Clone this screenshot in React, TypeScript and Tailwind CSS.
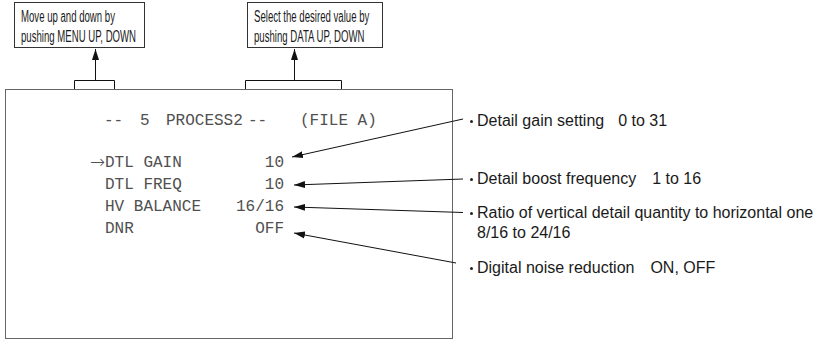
import React from "react";

const Bullet = () => (
  <span className="w-[11px] h-[20px] flex items-center justify-center shrink-0">
    <span className="w-[3px] h-[3px] rounded-full bg-[#222]" />
  </span>
);

const rows = [
  { sel: true, label: "DTL GAIN", value: "10" },
  { sel: false, label: "DTL FREQ", value: "10" },
  { sel: false, label: "HV BALANCE", value: "16/16" },
  { sel: false, label: "DNR", value: "OFF" },
];

function Callout({ lines, width }: { lines: string[]; width: string }) {
  return (
    <div className={`${width} h-[46px] border border-[#333] pl-[6px] pt-[4px]`}>
      {lines.map((l) => (
        <div key={l} className="h-[20px] leading-[20px] whitespace-nowrap">
          <span className="inline-block origin-left scale-x-[0.6]">{l}</span>
        </div>
      ))}
    </div>
  );
}

export default function App() {
  return (
    <div className="relative w-[816px] h-[340px] bg-white overflow-hidden font-['Liberation_Sans',Arial,sans-serif] text-[16px] text-[#1a1a1a]">
      {/* top callouts */}
      <div className="flex pt-[2px] pl-[14px] gap-[102px]">
        <Callout width="w-[131px]" lines={["Move up and down by", "pushing MENU UP, DOWN"]} />
        <Callout width="w-[136px]" lines={["Select the desired value by", "pushing DATA UP, DOWN"]} />
      </div>

      {/* main row */}
      <div className="flex mt-[41px]">
        <div className="ml-[5px] w-[448px] h-[250px] shrink-0 border border-[#666] font-['Liberation_Mono','DejaVu_Sans_Mono',monospace] text-[16px] text-[#505050]">
          <div className="pl-[98px] pt-[20px] flex leading-[22px] whitespace-pre">
            <span className="w-[36px]">--</span>
            <span className="w-[26px]">5</span>
            <span className="w-[82px]">PROCESS2</span>
            <span className="w-[52px]">--</span>
            <span>(FILE A)</span>
          </div>
          <div className="mt-[20px] flex flex-col">
            {rows.map((r) => (
              <div key={r.label} className="flex pl-[82px] leading-[22px] h-[22px] whitespace-pre">
                <span className="w-[17px] flex justify-end font-['DejaVu_Sans',sans-serif] text-[18px] leading-[20px] font-light">
                  {r.sel ? "→" : ""}
                </span>
                <span className="w-[131px]">{r.label}</span>
                <span className="w-[48px] text-right">{r.value}</span>
              </div>
            ))}
          </div>
        </div>

        <div className="pl-[13px] pt-[22px] flex flex-col leading-[20px] whitespace-nowrap">
          <div className="flex">
            <Bullet />
            <span>Detail gain setting</span>
            <span className="ml-[14px]">0 to 31</span>
          </div>
          <div className="flex mt-[38px]">
            <Bullet />
            <span>Detail boost frequency</span>
            <span className="ml-[16px]">1 to 16</span>
          </div>
          <div className="flex mt-[14px]">
            <Bullet />
            <div className="flex flex-col">
              <span>Ratio of vertical detail quantity to horizontal one</span>
              <span>8/16 to 24/16</span>
            </div>
          </div>
          <div className="flex mt-[15px]">
            <Bullet />
            <span>Digital noise reduction</span>
            <span className="ml-[16px]">ON, OFF</span>
          </div>
        </div>
      </div>

      {/* connector drawing */}
      <svg className="absolute inset-0 pointer-events-none" width="816" height="340" viewBox="0 0 816 340">
        <defs>
          <marker id="ah" markerUnits="userSpaceOnUse" markerWidth="11" markerHeight="8" refX="11" refY="4" orient="auto">
            <path d="M0,0.5 L11,4 L0,7.5 z" fill="#111" />
          </marker>
        </defs>
        <g stroke="#111" strokeWidth="1" fill="none">
          <path d="M74.5 89 V80.5 H114.5 V89" />
          <path d="M245.5 89 V80.5 H341.5 V89" />
          <line x1="95.5" y1="80" x2="95.5" y2="49" markerEnd="url(#ah)" />
          <line x1="294.5" y1="80" x2="294.5" y2="49" markerEnd="url(#ah)" />
          <line x1="463" y1="119" x2="292" y2="157" markerEnd="url(#ah)" />
          <line x1="463" y1="179" x2="294" y2="185" markerEnd="url(#ah)" />
          <line x1="463" y1="212.5" x2="294" y2="207" markerEnd="url(#ah)" />
          <line x1="456" y1="263" x2="294" y2="233" markerEnd="url(#ah)" />
        </g>
      </svg>
    </div>
  );
}
